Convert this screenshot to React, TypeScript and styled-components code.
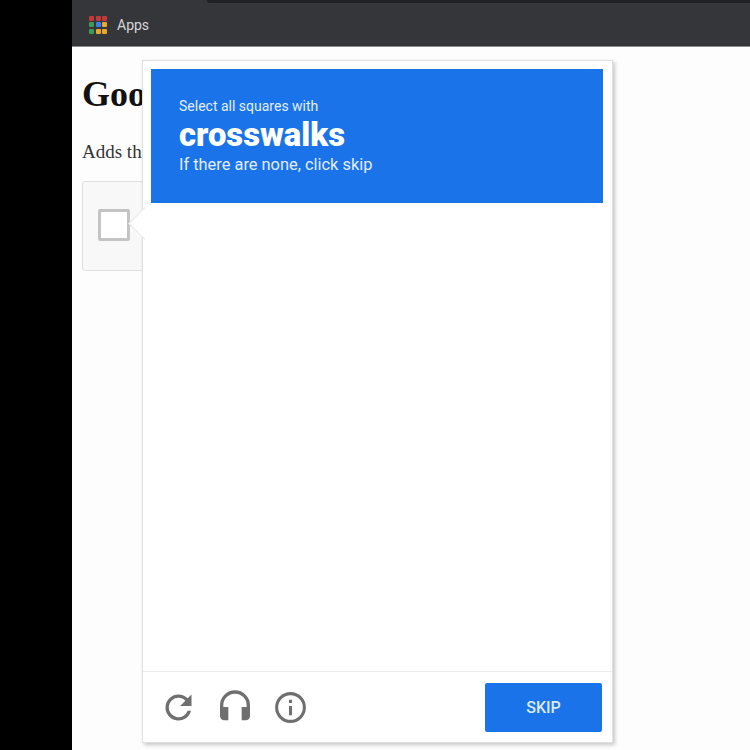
import React from 'react'
import styled, { createGlobalStyle } from 'styled-components'

const GlobalStyle = createGlobalStyle`
    html, body {
        margin: 0;
        padding: 0;
        background: #000;
    }
    body {
        width: 750px;
        height: 750px;
        overflow: hidden;
    }
`

const Screen = styled.div`
    display: flex;
    width: 750px;
    height: 750px;
    background: #000;
`
const Browser = styled.div`
    position: relative;
    margin-left: 72px;
    flex: 1;
    display: flex;
    flex-direction: column;
    background: #fdfdfd;
`
const Toolbar = styled.div`
    position: relative;
    display: flex;
    align-items: center;
    gap: 10px;
    height: 47px;
    padding: 3px 0 0 17px;
    box-sizing: border-box;
    background: #35363a;
    border-bottom: 1px solid #8a8b8d;
`
const Omnibox = styled.div`
    position: absolute;
    top: 0;
    left: 135px;
    right: 0;
    height: 3px;
    background: #202124;
    border-bottom-left-radius: 4px;
`
const AppsGrid = styled.div`
    display: grid;
    grid-template-columns: repeat(3, 5px);
    grid-auto-rows: 5px;
    gap: 1.5px;
`
const AppsDot = styled.span<{ $color: string }>`
    background: ${(p) => p.$color};
    border-radius: 1px;
`
const AppsLabel = styled.span`
    font-family: 'Roboto', sans-serif;
    font-size: 14px;
    color: #d5d7da;
`
const Page = styled.main`
    flex: 1;
    padding: 26px 0 0 10px;
    font-family: 'Liberation Serif', serif;
    color: #000;
`
const Title = styled.h1`
    margin: 0;
    font-size: 36px;
    line-height: 42px;
    font-weight: bold;
    color: #111;
`
const Intro = styled.p`
    margin: 26px 0 0;
    font-size: 19px;
    line-height: 22px;
    color: #333;
`
const CheckCard = styled.div`
    margin-top: 18px;
    width: 300px;
    height: 90px;
    box-sizing: border-box;
    display: flex;
    align-items: center;
    padding: 0 0 3px 15px;
    background: #f8f8f8;
    border: 1px solid #e0e0e0;
    border-radius: 3px;
`
const CheckBox = styled.div`
    width: 32px;
    height: 32px;
    box-sizing: border-box;
    background: #fff;
    border: 3px solid #c4c4c4;
    border-radius: 2px;
`
const Challenge = styled.section`
    position: absolute;
    left: 70px;
    top: 60px;
    width: 471px;
    height: 683px;
    box-sizing: border-box;
    display: flex;
    flex-direction: column;
    background: #fff;
    border: 1px solid #e0e0e0;
    box-shadow: 2px 2px 4px rgba(0, 0, 0, 0.22);
`
const Pointer = styled.div`
    position: absolute;
    left: -10px;
    top: 151px;
    width: 22px;
    height: 22px;
    background: #fff;
    border-left: 1px solid #e8e8e8;
    border-bottom: 1px solid #e8e8e8;
    transform: rotate(45deg);
`
const Prompt = styled.header`
    position: relative;
    margin: 8px 8px 0;
    height: 134px;
    width: 452px;
    box-sizing: border-box;
    padding: 29px 0 0 28px;
    background: #1a73e8;
    color: #fff;
    font-family: 'Roboto', sans-serif;
`
const PromptLine = styled.div`
    font-size: 14px;
    line-height: 16px;
    color: #e3eefc;
`
const PromptWord = styled.div`
    margin-top: 3px;
    font-size: 32.8px;
    line-height: 36px;
    font-weight: 900;
`
const PromptHint = styled.div`
    margin-top: 1px;
    font-size: 16.4px;
    line-height: 22px;
    color: #e3eefc;
`
const Body = styled.div`
    flex: 1;
`
const Footer = styled.footer`
    height: 71px;
    box-sizing: border-box;
    display: flex;
    align-items: center;
    justify-content: space-between;
    padding: 0 10px 0 16px;
    border-top: 1px solid #ececec;
`
const IconRow = styled.div`
    display: flex;
    align-items: center;
    gap: 17px;
    color: #6f6f6f;
`
const SkipButton = styled.button`
    width: 117px;
    height: 49px;
    margin-top: 1px;
    border: 0;
    border-radius: 2px;
    background: #1a73e8;
    color: #dbe9fb;
    font-family: 'Roboto', sans-serif;
    font-size: 16px;
    font-weight: 500;
`

const appsColors = [
    '#c5383a', '#c5383a', '#c5383a',
    '#3f9a58', '#3b82e8', '#e8a92c',
    '#3f9a58', '#e8a92c', '#e8a92c',
]

export default function App() {
    return (
        <>
            <GlobalStyle />
            <Screen>
                <Browser>
                    <Toolbar>
                        <Omnibox />
                        <AppsGrid>
                            {appsColors.map((color, i) => (
                                <AppsDot key={i} $color={color} />
                            ))}
                        </AppsGrid>
                        <AppsLabel>Apps</AppsLabel>
                    </Toolbar>
                    <Page>
                        <Title>Google</Title>
                        <Intro>Adds the</Intro>
                        <CheckCard>
                            <CheckBox />
                        </CheckCard>
                    </Page>
                    <Challenge>
                        <Pointer />
                        <Prompt>
                            <PromptLine>Select all squares with</PromptLine>
                            <PromptWord>crosswalks</PromptWord>
                            <PromptHint>If there are none, click skip</PromptHint>
                        </Prompt>
                        <Body />
                        <Footer>
                            <IconRow>
                                <svg width="39" height="39" viewBox="0 0 24 24" fill="currentColor">
                                    <path d="M17.65 6.35A7.96 7.96 0 0 0 12 4a8 8 0 1 0 7.73 10h-2.08A6 6 0 1 1 12 6c1.66 0 3.14.69 4.22 1.78L13 11h7V4l-2.35 2.35z" />
                                </svg>
                                <svg width="40" height="40" viewBox="0 2 24 24" fill="currentColor">
                                    <path d="M12 4a9 9 0 0 0-9 9v6.500A2.500 2.500 0 0 0 5.500 22H8v-8H5v-1a7 7 0 0 1 14 0v1h-3v8h2.500a2.500 2.500 0 0 0 2.500-2.500V13a9 9 0 0 0-9-9z" />
                                </svg>
                                <svg width="37" height="37" viewBox="0 0 24 24" fill="currentColor">
                                    <path d="M11 7h2v2h-2V7zm0 4h2v6h-2v-6zm1-9a10 10 0 1 0 0 20 10 10 0 0 0 0-20zm0 18a8 8 0 1 1 0-16 8 8 0 0 1 0 16z" />
                                </svg>
                            </IconRow>
                            <SkipButton>SKIP</SkipButton>
                        </Footer>
                    </Challenge>
                </Browser>
            </Screen>
        </>
    )
}
